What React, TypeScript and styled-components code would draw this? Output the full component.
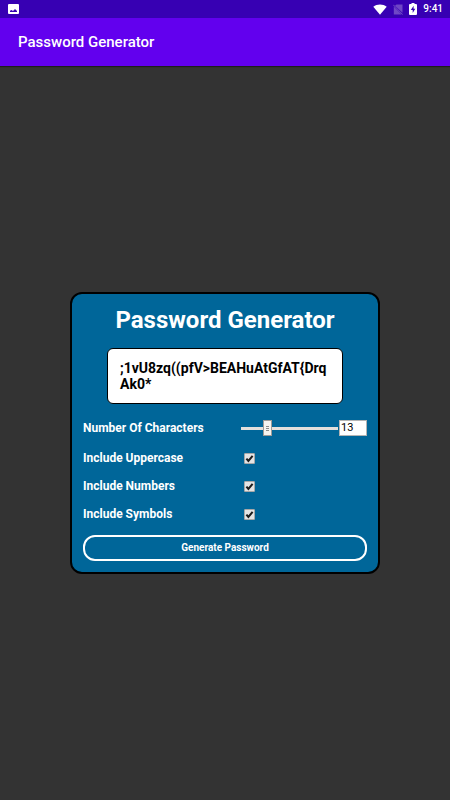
import React, { useState } from "react";
import styled, { createGlobalStyle } from "styled-components";

const GlobalStyle = createGlobalStyle`
  *, *::before, *::after { box-sizing: border-box; }
  body {
    margin: 0;
    background: #333333;
    color: #ffffff;
    font-family: Roboto, "Liberation Sans", sans-serif;
  }
`;

const Screen = styled.div`
  min-height: 100vh;
  display: flex;
  flex-direction: column;
`;

const StatusBar = styled.div`
  height: 18px;
  flex: none;
  display: flex;
  align-items: center;
  justify-content: space-between;
  padding: 0 7px 0 8px;
  background: #3700b3;
`;

const StatusIcons = styled.div`
  display: flex;
  align-items: center;
  gap: 6px;
`;

const Clock = styled.span`
  font-size: 10px;
  line-height: 18px;
  font-weight: 500;
`;

const AppBar = styled.header`
  height: 48px;
  flex: none;
  display: flex;
  align-items: center;
  padding: 0 18px;
  background: #6200ee;
  box-shadow: 0 1px 1px rgba(0, 0, 0, 0.4);
`;

const AppTitle = styled.span`
  font-size: 15px;
  line-height: 20px;
  font-weight: 500;
`;

const Content = styled.main`
  flex: 1;
  display: flex;
  align-items: center;
  justify-content: center;
  padding: 16px;
`;

const Card = styled.form`
  width: 100%;
  max-width: 310px;
  display: flex;
  flex-direction: column;
  padding: 11px;
  border: 2px solid #000000;
  border-radius: 12px;
  background: #006699;
`;

const Heading = styled.h1`
  margin: 0 0 12px;
  font-size: 24px;
  line-height: 31px;
  font-weight: 700;
  text-align: center;
`;

const Password = styled.output`
  display: block;
  min-height: 56px;
  margin: 0 24px 12px;
  padding: 11px 12px;
  border: 1px solid #000000;
  border-radius: 6px;
  background: #ffffff;
  color: #000000;
  font-size: 14px;
  line-height: 16px;
  font-weight: 700;
  word-break: break-all;
`;

const Row = styled.div`
  display: grid;
  grid-template-columns: 158px 1fr;
  align-items: center;
  min-height: 28px;
`;

const RangeRow = styled(Row)`
  grid-template-columns: 158px 1fr 28px;
  margin-bottom: 4px;
  min-height: 24px;
`;

const Label = styled.label`
  font-size: 12px;
  line-height: 16px;
  font-weight: 700;
`;

const Slider = styled.input`
  appearance: none;
  width: calc(100% - 1px);
  height: 16px;
  margin: 0;
  background: linear-gradient(#e4e0dc, #e4e0dc) center / 100% 3px no-repeat;

  &::-webkit-slider-thumb {
    appearance: none;
    width: 9px;
    height: 16px;
    border: 1px solid #a09c98;
    background:
      repeating-linear-gradient(#8c8c8c 0 1px, transparent 1px 2px) center / 3px 5px no-repeat,
      #f6f4f0;
  }
`;

const CountInput = styled.input`
  appearance: textfield;
  width: 28px;
  height: 16px;
  margin: 0;
  padding: 0 0 2px 1px;
  border: 1px solid #b4b4b4;
  border-radius: 0;
  background: #ffffff;
  color: #000000;
  font: 400 11px/13px Roboto, "Liberation Sans", sans-serif;

  &::-webkit-inner-spin-button {
    appearance: none;
    margin: 0;
  }
`;

const Tick = styled.span`
  display: grid;
  width: 11px;
  height: 11px;
  margin-left: 3px;

  > * { grid-area: 1 / 1; }
  > svg { pointer-events: none; visibility: hidden; }
  > input:checked + svg { visibility: visible; }
`;

const TickBox = styled.input`
  appearance: none;
  width: 11px;
  height: 11px;
  margin: 0;
  border: 1px solid #a8a8a8;
  border-radius: 1px;
  background: #e4e4e4;
`;

const GenerateButton = styled.button`
  height: 26px;
  margin: 7px 0 0;
  padding: 0 0 1px;
  border: 2px solid #ffffff;
  border-radius: 12px;
  background: transparent;
  color: #ffffff;
  font: 700 10px/16px Roboto, "Liberation Sans", sans-serif;
`;

const PictureIcon = () => (
  <svg width="11" height="10" viewBox="0 0 11 10" aria-hidden="true">
    <rect width="11" height="10" rx="1" fill="#fff" />
    <path d="M2 8 V6.7 L3.5 6 L5 6.9 L7 5 L9 7 V8 Z" fill="#3700b3" />
  </svg>
);

const WifiIcon = () => (
  <svg width="14" height="11" viewBox="0 0 14 11" aria-hidden="true">
    <path d="M7 10.8 L0.3 2.8 C4 -0.4 10 -0.4 13.7 2.8 Z" fill="#fff" />
  </svg>
);

const NoSimIcon = () => (
  <svg width="10" height="11" viewBox="0 0 10 11" aria-hidden="true">
    <path d="M3.5 0.5 H9.5 V8.7 L2 1.8 Z M0.8 2.4 L8.7 10.5 H0.8 Z" fill="#6f47c6" />
    <path d="M0.3 0.8 L9.7 10.6" stroke="#7d58cb" strokeWidth="0.9" />
  </svg>
);

const BatteryIcon = () => (
  <svg width="8" height="12" viewBox="0 0 8 12" aria-hidden="true">
    <path d="M2.5 0 H5.5 V1 H7.3 L8 1.7 V11.3 L7.3 12 H0.7 L0 11.3 V1.7 L0.7 1 H2.5 Z" fill="#fff" />
    <path d="M4.6 2.8 L1.8 7 H3.7 V10 L6.3 5.7 H4.6 Z" fill="#3700b3" />
  </svg>
);

const options = ["Uppercase", "Numbers", "Symbols"] as const;
type Option = (typeof options)[number];

const alphabets: Record<Option, string> = {
  Uppercase: "ABCDEFGHIJKLMNOPQRSTUVWXYZ",
  Numbers: "0123456789",
  Symbols: "!#$%&()*+,-./:;<=>?@[]^_{|}~",
};

const makePassword = (length: number, enabled: Record<Option, boolean>) => {
  const pool =
    "abcdefghijklmnopqrstuvwxyz" +
    options.filter((o) => enabled[o]).map((o) => alphabets[o]).join("");
  return Array.from({ length }, () => pool[Math.floor(Math.random() * pool.length)]).join("");
};

export default function App() {
  const [count, setCount] = useState(13);
  const [password, setPassword] = useState(";1vU8zq((pfV>BEAHuAtGfAT{DrqAk0*");
  const [enabled, setEnabled] = useState<Record<Option, boolean>>({
    Uppercase: true,
    Numbers: true,
    Symbols: true,
  });

  const changeCount = (e: React.ChangeEvent<HTMLInputElement>) =>
    setCount(Math.min(50, Math.max(1, Number(e.target.value))));

  const generate = (e: React.FormEvent) => {
    e.preventDefault();
    setPassword(makePassword(count, enabled));
  };

  return (
    <Screen>
      <GlobalStyle />
      <StatusBar>
        <PictureIcon />
        <StatusIcons>
          <WifiIcon />
          <NoSimIcon />
          <BatteryIcon />
          <Clock>9:41</Clock>
        </StatusIcons>
      </StatusBar>
      <AppBar>
        <AppTitle>Password Generator</AppTitle>
      </AppBar>
      <Content>
        <Card onSubmit={generate}>
          <Heading>Password Generator</Heading>
          <Password>{password}</Password>
          <RangeRow>
            <Label htmlFor="count">Number Of Characters</Label>
            <Slider
              type="range"
              min={1}
              max={50}
              value={count}
              onChange={changeCount}
              aria-label="Number Of Characters slider"
            />
            <CountInput id="count" type="number" min={1} max={50} value={count} onChange={changeCount} />
          </RangeRow>
          {options.map((option) => (
            <Row key={option}>
              <Label htmlFor={option}>Include {option}</Label>
              <Tick>
                <TickBox
                  id={option}
                  type="checkbox"
                  checked={enabled[option]}
                  onChange={(e) => setEnabled({ ...enabled, [option]: e.target.checked })}
                />
                <svg width="11" height="11" viewBox="0 0 11 11" aria-hidden="true">
                  <path d="M2.4 5.6 L4.4 8 L8.6 2.8" fill="none" stroke="#1c1c1c" strokeWidth="2" />
                </svg>
              </Tick>
            </Row>
          ))}
          <GenerateButton type="submit">Generate Password</GenerateButton>
        </Card>
      </Content>
    </Screen>
  );
}
